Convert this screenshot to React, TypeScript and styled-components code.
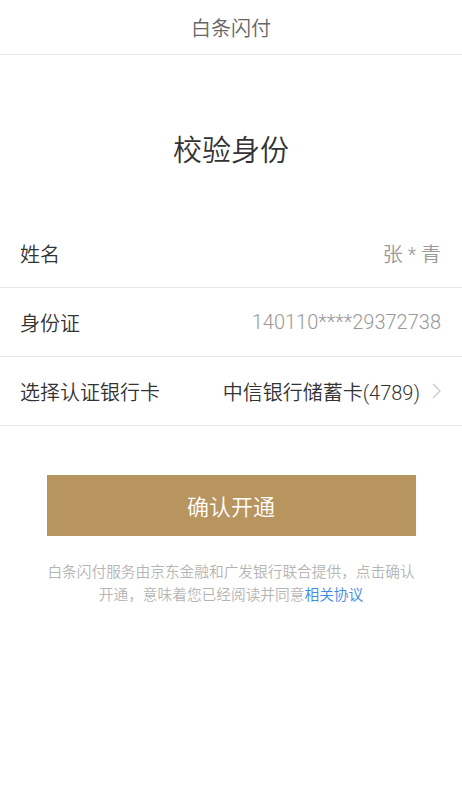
import { createGlobalStyle } from "styled-components";
import styled from "styled-components";

const FONT = `Roboto, "Liberation Sans", "Noto Sans CJK SC", sans-serif`;

interface Field {
  label: string;
  value: string;
  dark?: boolean;
  arrow?: boolean;
}

const fields: Field[] = [
  { label: "姓名", value: "张 * 青" },
  { label: "身份证", value: "140110****29372738" },
  { label: "选择认证银行卡", value: "中信银行储蓄卡(4789)", dark: true, arrow: true },
];

export default function App() {
  return (
    <Page>
      <GlobalStyle />
      <Header>白条闪付</Header>

      <Title>校验身份</Title>

      <List>
        {fields.map((field) => (
          <Row key={field.label}>
            <Label>{field.label}</Label>
            <Value $dark={field.dark}>
              {field.value}
              {field.arrow && (
                <Chevron width="9" height="16" viewBox="0 0 9 16">
                  <path d="M1 1l7 7-7 7" fill="none" stroke="#c8c8c8" strokeWidth="1.3" />
                </Chevron>
              )}
            </Value>
          </Row>
        ))}
      </List>

      <Confirm>确认开通</Confirm>

      <Notice>
        白条闪付服务由京东金融和广发银行联合提供，点击确认开通，意味着您已经阅读并同意
        <NoticeLink>相关协议</NoticeLink>
      </Notice>
    </Page>
  );
}

const GlobalStyle = createGlobalStyle`
  html, body {
    margin: 0;
    padding: 0;
    background: #fff;
  }
  body {
    font-family: ${FONT};
    font-weight: 350;
  }
`;

const Page = styled.div`
  width: 462px;
  min-height: 800px;
  background: #fff;
  font-family: ${FONT};
  font-weight: 350;
`;

const Header = styled.div`
  height: 54px;
  display: flex;
  align-items: center;
  justify-content: center;
  border-bottom: 1px solid #e6e6e6;
  font-size: 20px;
  color: #666;
`;

const Title = styled.h1`
  margin: 0;
  padding-top: 77px;
  height: 164px;
  box-sizing: border-box;
  text-align: center;
  font-size: 29px;
  font-weight: 350;
  color: #333;
  line-height: 38px;
`;

const List = styled.div`
  display: flex;
  flex-direction: column;
`;

const Row = styled.div`
  height: 68px;
  display: flex;
  align-items: center;
  justify-content: space-between;
  padding: 0 21px 0 20px;
  border-bottom: 1px solid #e8e8e8;
`;

const Label = styled.span`
  font-size: 20px;
  color: #333;
`;

const Value = styled.span<{ $dark?: boolean }>`
  display: flex;
  align-items: center;
  gap: 12px;
  font-size: 20px;
  color: ${(p) => (p.$dark ? "#333" : "#999")};
`;

const Chevron = styled.svg`
  display: block;
`;

const Confirm = styled.button`
  display: block;
  margin: 49px auto 0;
  width: 369px;
  height: 61px;
  border: none;
  background: #b8945f;
  color: #fff;
  font-family: ${FONT};
  font-weight: 350;
  font-size: 22px;
  padding-bottom: 3px;
  cursor: pointer;
`;

const Notice = styled.p`
  margin: 25px auto 0;
  width: 372px;
  text-align: center;
  font-size: 14.7px;
  line-height: 23px;
  color: #b5b5b5;
`;

const NoticeLink = styled.span`
  color: #3d8ae6;
`;
